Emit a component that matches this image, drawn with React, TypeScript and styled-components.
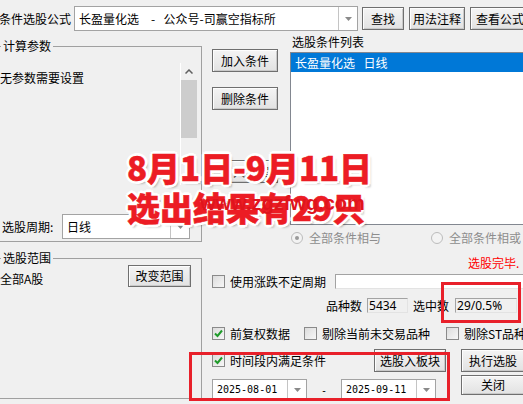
import React from 'react';
import styled, { createGlobalStyle } from 'styled-components';

const GlobalStyle = createGlobalStyle`
  html, body { margin: 0; padding: 0; background: #f0f0f0; }
  body { font-family: "Noto Sans CJK SC", "Noto Sans", sans-serif; font-size: 12px; color: #000; }
`;

const Window = styled.div`
  position: relative;
  width: 523px;
  height: 404px;
  overflow: hidden;
  background: #f0f0f0;
  font-family: "Noto Sans CJK SC", "Noto Sans", sans-serif;
  font-size: 12px;
  line-height: 14px;
  color: #000;
`;

const TopBar = styled.div`
  display: flex;
  align-items: center;
  height: 25px;
  margin-top: 6px;
  margin-bottom: 3px;
`;

const FormulaLabel = styled.span`
  flex: none;
  width: 75px;
  margin-left: -1px;
  white-space: nowrap;
`;

const Btn = styled.button<{ $w: number; $h?: number; $ml?: number }>`
  flex: none;
  box-sizing: border-box;
  width: ${(p) => p.$w}px;
  height: ${(p) => p.$h ?? 23}px;
  margin-left: ${(p) => p.$ml ?? 0}px;
  padding: 0;
  border: 1px solid #6f6f6f;
  background: linear-gradient(#f4f4f4, #e2e2e2);
  box-shadow: inset 1px 1px 0 #fdfdfd, inset -1px -1px 0 #c9c9c9;
  font: inherit;
  font-size: 12px;
  line-height: 14px;
  color: #000;
  white-space: nowrap;
  overflow: hidden;
`;

const Combo = styled.div<{ $w: number; $h: number; $ml?: number }>`
  flex: none;
  display: flex;
  box-sizing: border-box;
  width: ${(p) => p.$w}px;
  height: ${(p) => p.$h}px;
  margin-left: ${(p) => p.$ml ?? 0}px;
  border: 1px solid #a3a3a3;
  background: #fff;
`;

const ComboText = styled.div<{ $mono?: boolean; $pl?: number }>`
  flex: 1;
  display: flex;
  align-items: center;
  padding-left: ${(p) => p.$pl ?? 4}px;
  white-space: pre;
  overflow: hidden;
  font-family: ${(p) => (p.$mono ? '"DejaVu Sans Mono", "Liberation Mono", monospace' : 'inherit')};
  font-size: ${(p) => (p.$mono ? '10px' : '12px')};
`;

const ComboDrop = styled.div<{ $w?: number }>`
  flex: none;
  width: ${(p) => p.$w ?? 17}px;
  border-left: 1px solid #c4c4c4;
  display: flex;
  align-items: center;
  justify-content: center;
`;

const Main = styled.div`
  display: flex;
  align-items: flex-start;
`;

const LeftCol = styled.div`
  flex: none;
  width: 206px;
  margin-left: -4px;
  padding-top: 5px;
  display: flex;
  flex-direction: column;
  gap: 9px;
`;

const Group = styled.fieldset<{ $pb?: number }>`
  margin: 0;
  padding: 0 0 ${(p) => p.$pb ?? 0}px 0;
  min-width: 0;
  border: 1px solid #a0a0a0;
`;

const Legend = styled.legend`
  margin-left: 4px;
  padding: 0 2px;
  font-size: 12px;
  line-height: 14px;
`;

const ParamPanel = styled.div`
  display: flex;
  height: 122px;
  margin-top: 10px;
  margin-right: 4px;
`;

const ParamText = styled.div`
  flex: 1;
  padding: 8px 0 0 3px;
`;

const ScrollBar = styled.div`
  flex: none;
  width: 16px;
  border-left: 1px solid #ffffff;
  display: flex;
  flex-direction: column;
`;

const ScrollBtn = styled.div`
  height: 17px;
  display: flex;
  align-items: center;
  justify-content: center;
`;

const ScrollThumb = styled.div`
  height: 58px;
  background: #cdcdcd;
`;

const ScrollTrack = styled.div`
  flex: 1;
`;

const PeriodRow = styled.div`
  display: flex;
  align-items: center;
  margin-top: 29px;
`;

const PeriodLabel = styled.span`
  flex: none;
  width: 60px;
  padding-left: 5px;
`;

const RangeBody = styled.div`
  display: flex;
  justify-content: space-between;
  align-items: flex-start;
  height: 133px;
  padding-right: 10px;
`;

const RangeText = styled.span`
  padding: 7px 0 0 3px;
`;

const RightCol = styled.div`
  flex: 1;
  min-width: 0;
  display: flex;
  flex-direction: column;
`;

const UpperRight = styled.div`
  display: flex;
  align-items: flex-start;
`;

const ButtonCol = styled.div`
  flex: none;
  width: 66px;
  margin-left: 10px;
  padding-top: 15px;
  display: flex;
  flex-direction: column;
  align-items: flex-start;
`;

const ListCol = styled.div`
  flex: none;
  margin-left: 12px;
  padding-top: 1px;
  display: flex;
  flex-direction: column;
`;

const ListLabel = styled.div`
  padding-left: 2px;
`;

const ListBox = styled.div`
  box-sizing: border-box;
  width: 240px;
  height: 173px;
  margin-top: 3px;
  border: 1px solid #828790;
  background: #fff;
`;

const ListItem = styled.div<{ $selected?: boolean }>`
  height: 19px;
  display: flex;
  align-items: center;
  padding-left: 4px;
  white-space: pre;
  background: ${(p) => (p.$selected ? '#0078d7' : 'transparent')};
  color: ${(p) => (p.$selected ? '#fff' : '#000')};
`;

const RadioRow = styled.div`
  display: flex;
  align-items: center;
  height: 14px;
  margin-top: 6px;
  padding-left: 89px;
`;

const RadioItem = styled.label<{ $w?: number }>`
  display: flex;
  align-items: center;
  width: ${(p) => (p.$w ? `${p.$w}px` : 'auto')};
  color: #8d8d8d;
  white-space: nowrap;
  flex: none;
`;

const RadioCircle = styled.span<{ $on?: boolean }>`
  box-sizing: border-box;
  width: 12px;
  height: 12px;
  border-radius: 50%;
  border: 1px solid #bcbcbc;
  background: #f3f3f3;
  margin-right: 6px;
  display: flex;
  align-items: center;
  justify-content: center;
  &::after {
    content: '';
    width: 4px;
    height: 4px;
    border-radius: 50%;
    background: ${(p) => (p.$on ? '#9a9a9a' : 'transparent')};
  }
`;

const StatusRow = styled.div`
  height: 14px;
  margin-top: 11px;
  padding-left: 266px;
  color: #ff0000;
  white-space: nowrap;
`;

const Lower = styled.div`
  display: flex;
  flex-direction: column;
  padding-left: 10px;
`;

const Row = styled.div<{ $mt: number; $h: number; $pl?: number }>`
  display: flex;
  align-items: center;
  height: ${(p) => p.$h}px;
  margin-top: ${(p) => p.$mt}px;
  padding-left: ${(p) => p.$pl ?? 0}px;
  white-space: nowrap;
`;

const CheckItem = styled.label<{ $w?: number }>`
  display: flex;
  align-items: center;
  flex: none;
  width: ${(p) => (p.$w ? `${p.$w}px` : 'auto')};
  white-space: nowrap;
`;

const Box = styled.span`
  flex: none;
  box-sizing: border-box;
  width: 13px;
  height: 13px;
  margin-right: 5px;
  border: 1px solid #8a8a8a;
  background: linear-gradient(135deg, #dcdcdc, #f7f7f7);
  display: flex;
  align-items: center;
  justify-content: center;
`;

const TextField = styled.div<{ $w: number; $ml: number; $bg?: string }>`
  flex: none;
  box-sizing: border-box;
  width: ${(p) => p.$w}px;
  height: 15px;
  margin-left: ${(p) => p.$ml}px;
  padding-left: 1px;
  border: 1px solid #a3a3a3;
  border-right-color: #e3e3e3;
  border-bottom-color: #e3e3e3;
  background: ${(p) => p.$bg ?? '#fff'};
  display: flex;
  align-items: center;
  font-family: "Noto Sans", "Liberation Sans", sans-serif;
  font-size: 12px;
`;

const Label = styled.span<{ $ml?: number }>`
  margin-left: ${(p) => p.$ml ?? 0}px;
  flex: none;
`;

const BottomArea = styled.div`
  display: flex;
  margin-top: 9px;
`;

const LeftStack = styled.div`
  flex: none;
  width: 249px;
  display: flex;
  flex-direction: column;
  gap: 7px;
`;

const RightStack = styled.div`
  flex: none;
  display: flex;
  flex-direction: column;
  gap: 3px;
`;

const TimeRow = styled.div`
  display: flex;
  align-items: center;
  height: 23px;
  padding-right: 15px;
`;

const DateRow = styled.div`
  display: flex;
  align-items: center;
`;

const Dash = styled.span`
  width: 34px;
  text-align: center;
  font-family: "DejaVu Sans Mono", monospace;
  font-size: 10px;
  padding-top: 3px;
`;

const Caption = styled.div`
  position: absolute;
  left: 127px;
  top: 147px;
  font-family: "Noto Sans CJK SC", sans-serif;
  font-weight: 900;
  font-size: 33px;
  line-height: 40px;
  color: #ec1c24;
  -webkit-text-stroke: 0.5px #ec1c24;
  white-space: nowrap;
  text-shadow:
    2px 0 0 #fff, -2px 0 0 #fff, 0 2px 0 #fff, 0 -2px 0 #fff,
    2px 2px 0 #fff, -2px -2px 0 #fff, 2px -2px 0 #fff, -2px 2px 0 #fff,
    3px 0 0 #fff, -3px 0 0 #fff, 0 3px 0 #fff, 0 -3px 0 #fff,
    3px 3px 2px rgba(0, 0, 0, 0.25);
`;

const Watermark = styled.div`
  position: absolute;
  left: 200px;
  top: 192px;
  font-family: "Liberation Sans", Arial, sans-serif;
  font-weight: 700;
  font-size: 20px;
  line-height: 22px;
  color: #e0141c;
  white-space: nowrap;
`;

const Frame = styled.div<{ $x: number; $y: number; $w: number; $h: number }>`
  position: absolute;
  left: ${(p) => p.$x}px;
  top: ${(p) => p.$y}px;
  width: ${(p) => p.$w}px;
  height: ${(p) => p.$h}px;
  box-sizing: border-box;
  border: 3px solid #e8202a;
`;

const DropArrow = () => (
  <svg width="7" height="4" viewBox="0 0 7 4">
    <path d="M0 0h7L3.5 4z" fill="#8a8a8a" />
  </svg>
);

const Check = () => (
  <svg width="11" height="11" viewBox="0 0 11 11">
    <path d="M2 5.5 L4.5 8 L9 2.5" fill="none" stroke="#1f9b2a" strokeWidth="2" />
  </svg>
);

const UpChevron = () => (
  <svg width="8" height="5" viewBox="0 0 8 5">
    <path d="M0.5 4.5 L4 1 L7.5 4.5" fill="none" stroke="#606060" strokeWidth="1.5" />
  </svg>
);

const DownTri = () => (
  <svg width="7" height="4" viewBox="0 0 7 4">
    <path d="M0 0h7L3.5 4z" fill="#606060" />
  </svg>
);

export default function App() {
  return (
    <>
      <GlobalStyle />
      <Window>
        <TopBar>
          <FormulaLabel>条件选股公式</FormulaLabel>
          <Combo $w={284} $h={25}>
            <ComboText $pl={4}>{'长盈量化选\u2002\u2002-\u2002\u2009公众号-司赢空指标所'}</ComboText>
            <ComboDrop $w={18}>
              <DropArrow />
            </ComboDrop>
          </Combo>
          <Btn $w={42} $ml={4}>查找</Btn>
          <Btn $w={56} $ml={5}>用法注释</Btn>
          <Btn $w={60} $ml={5}>查看公式</Btn>
        </TopBar>
        <Main>
          <LeftCol>
            <Group $pb={2}>
              <Legend>计算参数</Legend>
              <ParamPanel>
                <ParamText>无参数需要设置</ParamText>
                <ScrollBar>
                  <ScrollBtn>
                    <UpChevron />
                  </ScrollBtn>
                  <ScrollThumb />
                  <ScrollTrack />
                  <ScrollBtn>
                    <DownTri />
                  </ScrollBtn>
                </ScrollBar>
              </ParamPanel>
              <PeriodRow>
                <PeriodLabel>选股周期:</PeriodLabel>
                <Combo $w={128} $h={25}>
                  <ComboText $pl={4}>日线</ComboText>
                  <ComboDrop $w={18}>
                    <DropArrow />
                  </ComboDrop>
                </Combo>
              </PeriodRow>
            </Group>
            <Group>
              <Legend>选股范围</Legend>
              <RangeBody>
                <RangeText>全部A股</RangeText>
                <Btn $w={63} $h={22}>改变范围</Btn>
              </RangeBody>
            </Group>
          </LeftCol>
          <RightCol>
            <UpperRight>
              <ButtonCol>
                <Btn $w={66}>加入条件</Btn>
                <Btn $w={66} style={{ marginTop: 15 }}>删除条件</Btn>
                <Btn $w={66} style={{ marginTop: 50 }}>引入方案</Btn>
              </ButtonCol>
              <ListCol>
                <ListLabel>选股条件列表</ListLabel>
                <ListBox>
                  <ListItem $selected>{'长盈量化选\u2002\u2009日线'}</ListItem>
                </ListBox>
              </ListCol>
            </UpperRight>
            <RadioRow>
              <RadioItem $w={140}>
                <RadioCircle $on />
                全部条件相与
              </RadioItem>
              <RadioItem>
                <RadioCircle />
                全部条件相或
              </RadioItem>
            </RadioRow>
            <StatusRow>选股完毕.</StatusRow>
            <Lower>
              <Row $mt={4} $h={15}>
                <CheckItem>
                  <Box />
                  使用涨跌不定周期
                </CheckItem>
                <TextField $w={200} $ml={9} />
              </Row>
              <Row $mt={9} $h={15} $pl={114}>
                <Label>品种数</Label>
                <TextField $w={41} $ml={5} $bg="#f0f0f0">5434</TextField>
                <Label $ml={5}>选中数</Label>
                <TextField $w={62} $ml={6} $bg="#f0f0f0">29/0.5%</TextField>
              </Row>
              <Row $mt={14} $h={13}>
                <CheckItem $w={92}>
                  <Box>
                    <Check />
                  </Box>
                  前复权数据
                </CheckItem>
                <CheckItem $w={142}>
                  <Box />
                  剔除当前未交易品种
                </CheckItem>
                <CheckItem>
                  <Box />
                  剔除ST品种
                </CheckItem>
              </Row>
              <BottomArea>
                <LeftStack>
                  <TimeRow>
                    <CheckItem>
                      <Box>
                        <Check />
                      </Box>
                      时间段内满足条件
                    </CheckItem>
                    <Btn $w={72} style={{ marginLeft: 'auto' }}>选股入板块</Btn>
                  </TimeRow>
                  <DateRow>
                    <Combo $w={95} $h={21}>
                      <ComboText $mono $pl={4}>2025-08-01</ComboText>
                      <ComboDrop $w={18}>
                        <DropArrow />
                      </ComboDrop>
                    </Combo>
                    <Dash>-</Dash>
                    <Combo $w={95} $h={21}>
                      <ComboText $mono $pl={4}>2025-09-11</ComboText>
                      <ComboDrop $w={18}>
                        <DropArrow />
                      </ComboDrop>
                    </Combo>
                  </DateRow>
                </LeftStack>
                <RightStack>
                  <Btn $w={64}>执行选股</Btn>
                  <Btn $w={64} $h={20}>关闭</Btn>
                </RightStack>
              </BottomArea>
            </Lower>
          </RightCol>
        </Main>
        <Caption>
          8月1日-9月11日
          <br />
          选出结果有29只
        </Caption>
        <Watermark>www.zgzfwg.com</Watermark>
        <Frame $x={441} $y={282} $w={80} $h={41} />
        <Frame $x={189} $y={352} $w={261} $h={49} />
      </Window>
    </>
  );
}
